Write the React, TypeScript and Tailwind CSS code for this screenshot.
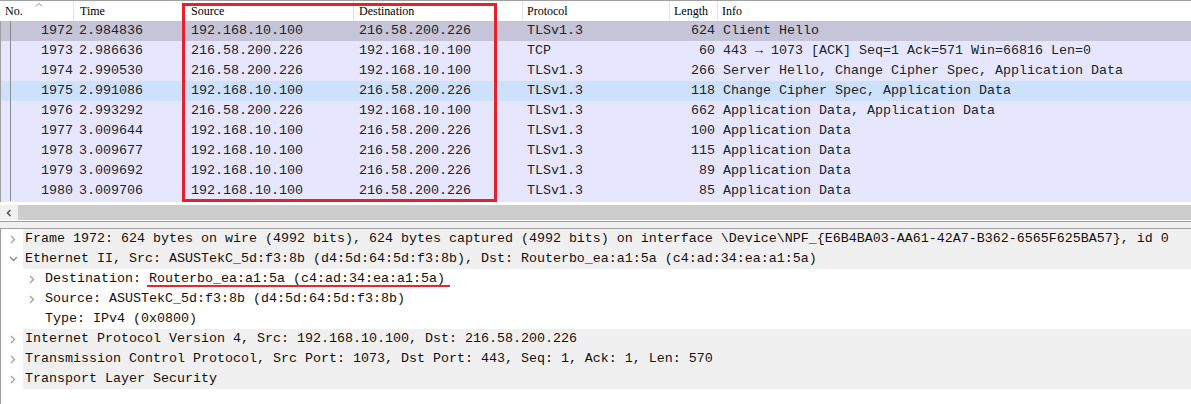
import React from "react";

type Packet = {
  no: number;
  time: string;
  src: string;
  dst: string;
  proto: string;
  len: number;
  info: string;
  bg: string;
};

const A = "192.168.10.100";
const B = "216.58.200.226";

const packets: Packet[] = [
  { no: 1972, time: "2.984836", src: A, dst: B, proto: "TLSv1.3", len: 624, info: "Client Hello", bg: "bg-[#c5c4d9]" },
  { no: 1973, time: "2.986636", src: B, dst: A, proto: "TCP", len: 60, info: "443 → 1073 [ACK] Seq=1 Ack=571 Win=66816 Len=0", bg: "bg-[#e7e6ff]" },
  { no: 1974, time: "2.990530", src: B, dst: A, proto: "TLSv1.3", len: 266, info: "Server Hello, Change Cipher Spec, Application Data", bg: "bg-[#e7e6ff]" },
  { no: 1975, time: "2.991086", src: A, dst: B, proto: "TLSv1.3", len: 118, info: "Change Cipher Spec, Application Data", bg: "bg-[#cde0fc]" },
  { no: 1976, time: "2.993292", src: B, dst: A, proto: "TLSv1.3", len: 662, info: "Application Data, Application Data", bg: "bg-[#e7e6ff]" },
  { no: 1977, time: "3.009644", src: A, dst: B, proto: "TLSv1.3", len: 100, info: "Application Data", bg: "bg-[#e7e6ff]" },
  { no: 1978, time: "3.009677", src: A, dst: B, proto: "TLSv1.3", len: 115, info: "Application Data", bg: "bg-[#e7e6ff]" },
  { no: 1979, time: "3.009692", src: A, dst: B, proto: "TLSv1.3", len: 89, info: "Application Data", bg: "bg-[#e7e6ff]" },
  { no: 1980, time: "3.009706", src: A, dst: B, proto: "TLSv1.3", len: 85, info: "Application Data", bg: "bg-[#e7e6ff]" },
];

function Chevron({ open = false }: { open?: boolean }) {
  return open ? (
    <svg width="9" height="6" viewBox="0 0 9 6" className="block">
      <polyline points="1,1 4.5,4.5 8,1" fill="none" stroke="#8a8a8a" strokeWidth="1.3" />
    </svg>
  ) : (
    <svg width="6" height="9" viewBox="0 0 6 9" className="block">
      <polyline points="1,1 4.5,4.5 1,8" fill="none" stroke="#a0a0a0" strokeWidth="1.3" />
    </svg>
  );
}

function TreeRow({
  level,
  arrow,
  shaded,
  children,
}: {
  level: 0 | 1;
  arrow: "closed" | "open" | "none";
  shaded?: boolean;
  children: React.ReactNode;
}) {
  return (
    <div className="flex h-[20px] items-center">
      <div className={level === 0 ? "flex w-[22px] justify-center pl-[2px]" : "flex w-[42px] justify-end pr-[8px]"}>
        {arrow !== "none" && <Chevron open={arrow === "open"} />}
      </div>
      <div
        className={
          "flex h-full flex-1 items-center whitespace-pre pl-[2px] text-[#111]" +
          (shaded ? " bg-[#f0f0f0]" : "")
        }
      >
        {children}
      </div>
    </div>
  );
}

export default function App() {
  return (
    <div className="relative h-[404px] w-[1191px] overflow-hidden bg-white font-['Liberation_Mono',monospace] text-[13.33px] leading-[20px]">
      {/* column header */}
      <div className="flex h-[21px] border-t border-[#a0a0a0] bg-white font-['Liberation_Serif',serif] text-[12px] text-black">
        <div className="relative flex w-[74px] items-center border-r border-[#e3e3e3] pl-[5px]">
          No.
          <svg width="8" height="5" viewBox="0 0 8 5" className="absolute left-[35px] top-[1px]">
            <polyline points="1,4.5 4,1.5 7,4.5" fill="none" stroke="#8a8a8a" strokeWidth="1" />
          </svg>
        </div>
        <div className="flex w-[109px] items-center border-r border-[#e3e3e3] pl-[6px]">Time</div>
        <div className="flex w-[171px] items-center border-r border-[#e3e3e3] pl-[8px]">Source</div>
        <div className="flex w-[169px] items-center border-r border-[#e3e3e3] pl-[5px]">Destination</div>
        <div className="flex w-[147px] items-center border-r border-[#e3e3e3] pl-[4px]">Protocol</div>
        <div className="flex w-[48px] items-center border-r border-[#e3e3e3] pl-[4px]">Length</div>
        <div className="flex flex-1 items-center pl-[4px]">Info</div>
      </div>

      {/* packet rows */}
      <div className="border-l border-[#a0a0a0]">
        {packets.map((p) => (
          <div key={p.no} className={"flex h-[20px] text-[#12272e] " + p.bg}>
            <div className="relative w-[73px] pr-[1px] text-right">
              <span className="absolute left-[9px] top-0 h-full w-px bg-[#8c8c8c]" />
              {p.no}
            </div>
            <div className="w-[109px] pl-[5px]">{p.time}</div>
            <div className="w-[171px] pl-[8px]">{p.src}</div>
            <div className="w-[169px] pl-[5px]">{p.dst}</div>
            <div className="w-[147px] pl-[4px]">{p.proto}</div>
            <div className="w-[48px] pr-[3px] text-right">{p.len}</div>
            <div className="flex-1 whitespace-pre pl-[5px]">{p.info}</div>
          </div>
        ))}
        <div className="h-[1px] bg-[#e7e6ff]" />
      </div>

      {/* horizontal scrollbar */}
      <div className="mt-[3px] flex h-[15px]">
        <div className="flex w-[18px] items-center justify-center bg-[#f0f0f0]">
          <svg width="6" height="8" viewBox="0 0 6 8">
            <polyline points="4.5,1 1.5,4 4.5,7" fill="none" stroke="#555" strokeWidth="1.6" />
          </svg>
        </div>
        <div className="flex-1 bg-[#cdcdcd]" />
      </div>

      {/* splitter */}
      <div className="mt-[1px] h-[8px] border-y border-[#a0a0a0] bg-[#f0f0f0]" />

      {/* details tree */}
      <div className="h-[176px] border-l border-[#a0a0a0]">
        <TreeRow level={0} arrow="closed" shaded>
          Frame 1972: 624 bytes on wire (4992 bits), 624 bytes captured (4992 bits) on interface \Device\NPF_{"{"}E6B4BA03-AA61-42A7-B362-6565F625BA57{"}"}, id 0
        </TreeRow>
        <TreeRow level={0} arrow="open" shaded>
          Ethernet II, Src: ASUSTekC_5d:f3:8b (d4:5d:64:5d:f3:8b), Dst: Routerbo_ea:a1:5a (c4:ad:34:ea:a1:5a)
        </TreeRow>
        <TreeRow level={1} arrow="closed">
          Destination:{" "}
          <span className="relative">
            Routerbo_ea:a1:5a (c4:ad:34:ea:a1:5a)
            <span className="absolute left-[-2px] right-[-5px] top-[16px] h-[2px] bg-[#e8262d]" />
          </span>
        </TreeRow>
        <TreeRow level={1} arrow="closed">
          Source: ASUSTekC_5d:f3:8b (d4:5d:64:5d:f3:8b)
        </TreeRow>
        <TreeRow level={1} arrow="none">
          Type: IPv4 (0x0800)
        </TreeRow>
        <TreeRow level={0} arrow="closed" shaded>
          Internet Protocol Version 4, Src: 192.168.10.100, Dst: 216.58.200.226
        </TreeRow>
        <TreeRow level={0} arrow="closed" shaded>
          Transmission Control Protocol, Src Port: 1073, Dst Port: 443, Seq: 1, Ack: 1, Len: 570
        </TreeRow>
        <TreeRow level={0} arrow="closed" shaded>
          Transport Layer Security
        </TreeRow>
      </div>

      {/* red annotation box */}
      <div className="pointer-events-none absolute left-[182px] top-[3px] h-[199px] w-[315px] border-[3px] border-[#e8202a]" />
    </div>
  );
}
